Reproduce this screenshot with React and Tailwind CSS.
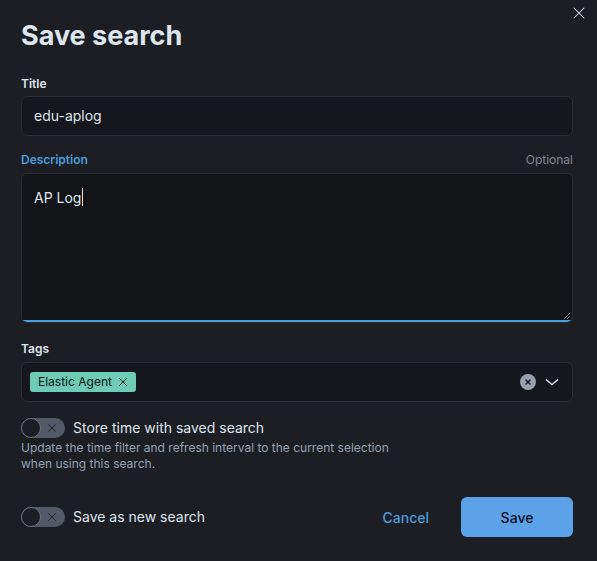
import React from 'react';

const font = { fontFamily: 'Inter, "Noto Sans", sans-serif' };

const Toggle = () => (
  <span className="relative inline-flex h-5 w-11 shrink-0 items-center rounded-full bg-[#535966]">
    <span className="absolute left-0 top-0 h-5 w-5 rounded-full border border-[#6a6f7a] bg-[#1d1e24]" />
    <svg viewBox="0 0 16 16" className="absolute right-[7px] h-3 w-3" fill="none" stroke="#1d1e24" strokeWidth="1.2">
      <path d="M3 3l10 10M13 3L3 13" />
    </svg>
  </span>
);

export default function App() {
  return (
    <div className="h-[561px] w-[597px] overflow-hidden bg-[#1d1e24] pl-[21px] pr-[24px] relative" style={font}>
      <button className="absolute right-[10px] top-[5px] flex h-4 w-4 items-center justify-center">
        <svg viewBox="0 0 16 16" className="h-[14px] w-[14px]" fill="none" stroke="#dfe5ef" strokeWidth="1.2">
          <path d="M2 2l12 12M14 2L2 14" />
        </svg>
      </button>

      <h1 className="pt-[18px] text-[27px] font-bold leading-[36px] text-[#dfe5ef]">Save search</h1>

      <div className="mt-[22px] text-[12px] font-semibold leading-[16px] text-[#dfe5ef]">Title</div>
      <div className="mt-[4px] flex h-10 items-center rounded-md border border-[#2c2e35] bg-[#16171c] px-3 pb-[2px] text-[14px] text-[#dfe5ef]">
        edu-aplog
      </div>

      <div className="mt-[16px] flex items-center justify-between text-[12px] leading-[16px]">
        <span className="font-semibold text-[#4a9cdb]">Description</span>
        <span className="text-[#81858f]">Optional</span>
      </div>
      <div className="relative mt-[5px] h-[150px] rounded-md border border-[#2c2e35] bg-[#131418] px-3 pt-[11px] text-[14px] leading-[20px] text-[#dfe5ef] overflow-hidden">
        <span>AP Log</span>
        <span className="ml-px inline-block h-[18px] w-px translate-y-[3px] bg-[#dfe5ef]" />
        <div className="absolute bottom-0 left-0 right-0 h-[2px] bg-[#4a9cdb]" />
        <svg viewBox="0 0 8 8" className="absolute bottom-[2px] right-[1px] h-2 w-2" fill="none" stroke="#9aa0aa" strokeWidth="0.8">
          <path d="M7 1L1 7M7 4L4 7" />
        </svg>
      </div>

      <div className="mt-[18px] text-[12px] font-semibold leading-[16px] text-[#dfe5ef]">Tags</div>
      <div className="mt-[5px] flex h-10 items-center rounded-md border border-[#2c2e35] bg-[#16171c] pl-2 pr-3">
        <span className="flex h-5 items-center gap-[6px] rounded-[3px] bg-[#6dccb1] px-2 text-[12px] text-[#07101f]">
          Elastic Agent
          <svg viewBox="0 0 16 16" className="h-[10px] w-[10px]" fill="none" stroke="#07101f" strokeWidth="1.5">
            <path d="M2 2l12 12M14 2L2 14" />
          </svg>
        </span>
        <span className="ml-auto flex items-center gap-[8px]">
          <span className="flex h-4 w-4 items-center justify-center rounded-full bg-[#98a2b3]">
            <svg viewBox="0 0 16 16" className="h-2 w-2" fill="none" stroke="#1d1e24" strokeWidth="3">
              <path d="M3 3l10 10M13 3L3 13" />
            </svg>
          </span>
          <svg viewBox="0 0 16 16" className="h-4 w-4" fill="none" stroke="#dfe5ef" strokeWidth="1.5">
            <path d="M2 5.5l6 5 6-5" />
          </svg>
        </span>
      </div>

      <div className="mt-4 flex items-center gap-2">
        <Toggle />
        <span className="text-[14px] leading-[20px] text-[#dfe5ef]">Store time with saved search</span>
      </div>
      <p className="mt-[2px] w-[380px] text-[12px] leading-[16px] text-[#98a2b3]">
        Update the time filter and refresh interval to the current selection when using this search.
      </p>

      <div className="mt-[25px] flex h-10 items-center">
        <Toggle />
        <span className="ml-2 text-[14px] leading-[20px] text-[#dfe5ef]">Save as new search</span>
        <span className="ml-auto mr-8 text-[14px] font-medium text-[#4a9cdb]">Cancel</span>
        <button className="h-10 w-[112px] rounded-md bg-[#5ba2e8] text-[14px] font-medium text-[#07101f]">Save</button>
      </div>
    </div>
  );
}
